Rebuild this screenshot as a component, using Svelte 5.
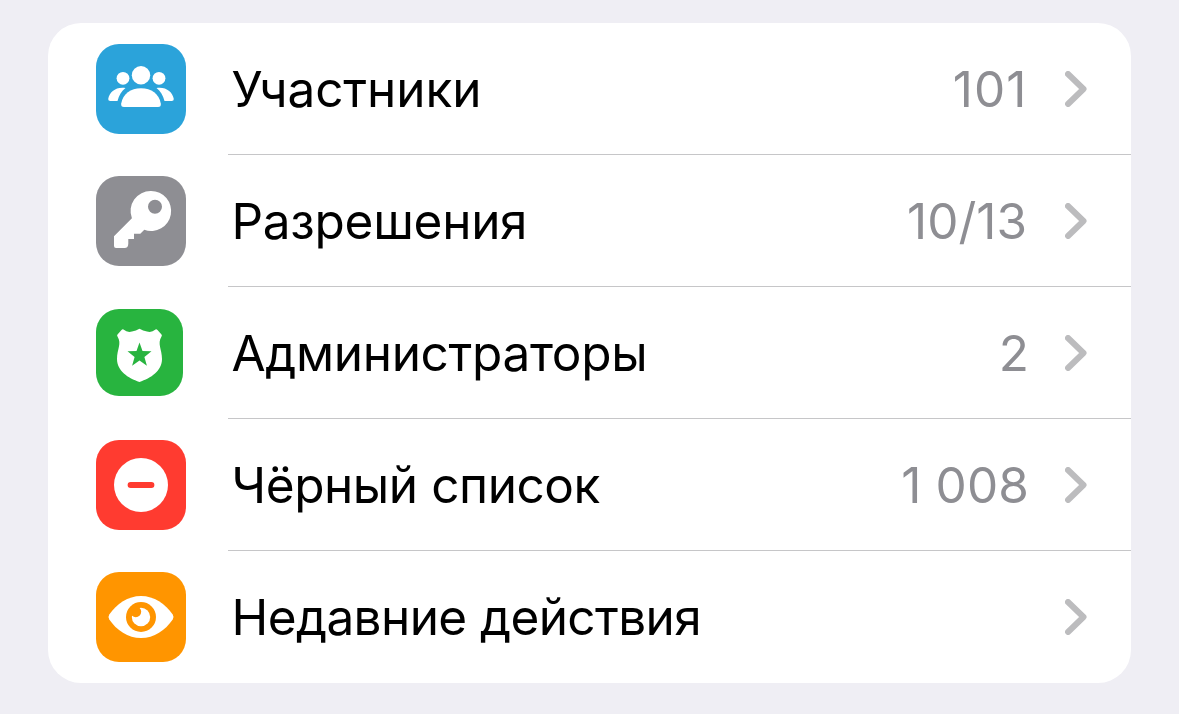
<script lang="ts">
  type Icon = "members" | "key" | "shield" | "minus" | "eye";

  type Item = {
    icon: Icon;
    label: string;
    tracking: number;
    value?: string;
    valueTracking?: number;
    valueShift?: number;
  };

  // tracking is in px, applied as letter-spacing
  const items: Item[] = [
    { icon: "members", label: "Участники", tracking: -0.1, value: "101", valueTracking: 1.1, valueShift: 1.5 },
    { icon: "key", label: "Разрешения", tracking: -0.28, value: "10/13", valueTracking: 0, valueShift: 2 },
    { icon: "shield", label: "Администраторы", tracking: -0.34, value: "2", valueTracking: 0 },
    { icon: "minus", label: "Чёрный список", tracking: -0.44, value: "1 008", valueTracking: 0.1 },
    { icon: "eye", label: "Недавние действия", tracking: -0.6 },
  ];
</script>

<main>
  <div class="card">
    {#each items as item (item.icon)}
      <button class="row">
        <span class="icon {item.icon}">
          {#if item.icon === "members"}
            <svg viewBox="0 0 90 90" fill="#fff">
              <circle cx="45" cy="31.3" r="9.2" />
              <circle cx="27" cy="34.3" r="6.4" />
              <circle cx="63" cy="34.3" r="6.4" />
              <path d="M45 44.3C34.5 44.3 27 50 25.2 59.5Q24.7 63 28 63H62Q65.3 63 64.8 59.5C63 50 55.5 44.3 45 44.3Z" />
              <path d="M29.5 44C20 42.5 13.5 48 12.3 54.5Q12 57 14.5 57H21.5C23 51.5 25.5 47 29.5 44Z" />
              <path d="M60.5 44C70 42.5 76.5 48 77.7 54.5Q78 57 75.5 57H68.5C67 51.5 64.5 47 60.5 44Z" />
            </svg>
          {:else if item.icon === "key"}
            <svg viewBox="0 0 90 90" fill="#fff">
              <path
                fill-rule="evenodd"
                d="M55 15a20 20 0 1 1-6.7 38.8L44.3 57.7H38V63H32.3V67.5Q32.3 72 28.5 72H20Q18 72 18 70V60.3L35.9 42.2A20 20 0 0 1 55 15ZM59 23.7a7 7 0 1 0 0 14a7 7 0 1 0 0-14Z"
              />
            </svg>
          {:else if item.icon === "shield"}
            <svg viewBox="0 0 87 87" fill="#fff">
              <path
                fill-rule="evenodd"
                d="M27.5 20.5Q31.5 24 36 22.5Q40 22 43.5 19.8Q47 22 51 22.5Q55.5 24 59.5 20.5Q60.5 20 61.5 21L65.5 25.5Q66.3 26.5 65.5 27.5C61 35 66 40 66 50C66 62 55 69 43.5 73C32 69 21 62 21 50C21 40 26 35 21.5 27.5Q20.7 26.5 21.5 25.5L25.5 21Q26.5 20 27.5 20.5ZM43.5 33.5L40.5 42L31.5 42.3L38.6 47.9L36.1 56.7L43.5 51.6L50.9 56.7L48.4 47.9L55.5 42.3L46.5 42Z"
              />
            </svg>
          {:else if item.icon === "minus"}
            <svg viewBox="0 0 90 90">
              <circle cx="45" cy="45" r="27" fill="#fff" />
              <rect x="31.6" y="42" width="26.8" height="6" rx="3" fill="#ff3b30" />
            </svg>
          {:else}
            <svg viewBox="0 0 90 90">
              <path
                fill="#fff"
                d="M13.3 42.6C20.5 32 32 24 45 24S69.5 32 76.7 42.6Q78.3 45 76.7 47.4C69.5 58 58 66 45 66S20.5 58 13.3 47.4Q11.7 45 13.3 42.6Z"
              />
              <circle cx="45" cy="45" r="15" fill="#ff9500" />
              <circle cx="45" cy="45" r="9.2" fill="#fff" />
              <circle cx="39.8" cy="39.8" r="5.4" fill="#ff9500" />
            </svg>
          {/if}
        </span>
        <span class="content">
          <span class="label" style="letter-spacing: {item.tracking}px">{item.label}</span>
          {#if item.value}
            <span
              class="value"
              style="letter-spacing: {item.valueTracking}px; padding-right: {item.valueShift ?? 0}px"
            >{item.value}</span>
          {/if}
          <svg class="chevron" viewBox="0 0 22 36">
            <path d="M3 3L18.5 18L3 33" />
          </svg>
        </span>
      </button>
    {/each}
  </div>
</main>

<style>
  :global(body) {
    background: #efeef4;
  }
  main {
    box-sizing: border-box;
    height: 714px;
    padding: 23px 48px 31px;
    font-family: Inter, "Liberation Sans", sans-serif;
  }
  .card {
    background: #fff;
    border-radius: 33px;
    overflow: hidden;
  }
  .row {
    display: flex;
    align-items: center;
    width: 100%;
    height: 132px;
    padding: 0 0 0 48px;
    border: none;
    background: none;
    font: inherit;
    text-align: left;
  }
  .icon {
    flex: none;
    width: 90px;
    height: 90px;
    margin-right: 42px;
    border-radius: 23px;
    overflow: hidden;
  }
  .icon svg {
    display: block;
    width: 100%;
    height: 100%;
  }
  .members {
    background: #2ba3da;
  }
  .key {
    background: #8e8e93;
  }
  .shield {
    width: 87px;
    height: 87px;
    margin-right: 45px;
    margin-bottom: 1px;
    background: #28b43f;
  }
  .minus {
    background: #ff3b30;
  }
  .eye {
    background: #ff9500;
  }
  .content {
    display: flex;
    align-items: center;
    flex: 1;
    box-sizing: border-box;
    height: 132px;
    padding: 0 44px 0 3.5px;
    border-bottom: 1px solid #c6c6c8;
  }
  .row:last-child .content {
    border-bottom-color: transparent;
  }
  .label {
    flex: 1;
    color: #000;
    font-size: 49.5px;
    line-height: 60px;
    white-space: nowrap;
  }
  .value {
    color: #8e8e93;
    font-size: 49.5px;
    line-height: 60px;
    white-space: nowrap;
  }
  .chevron {
    width: 22px;
    height: 36px;
    margin-left: 36px;
    fill: none;
    stroke: #bcbcbe;
    stroke-width: 6;
    stroke-linecap: round;
    stroke-linejoin: round;
  }
</style>
